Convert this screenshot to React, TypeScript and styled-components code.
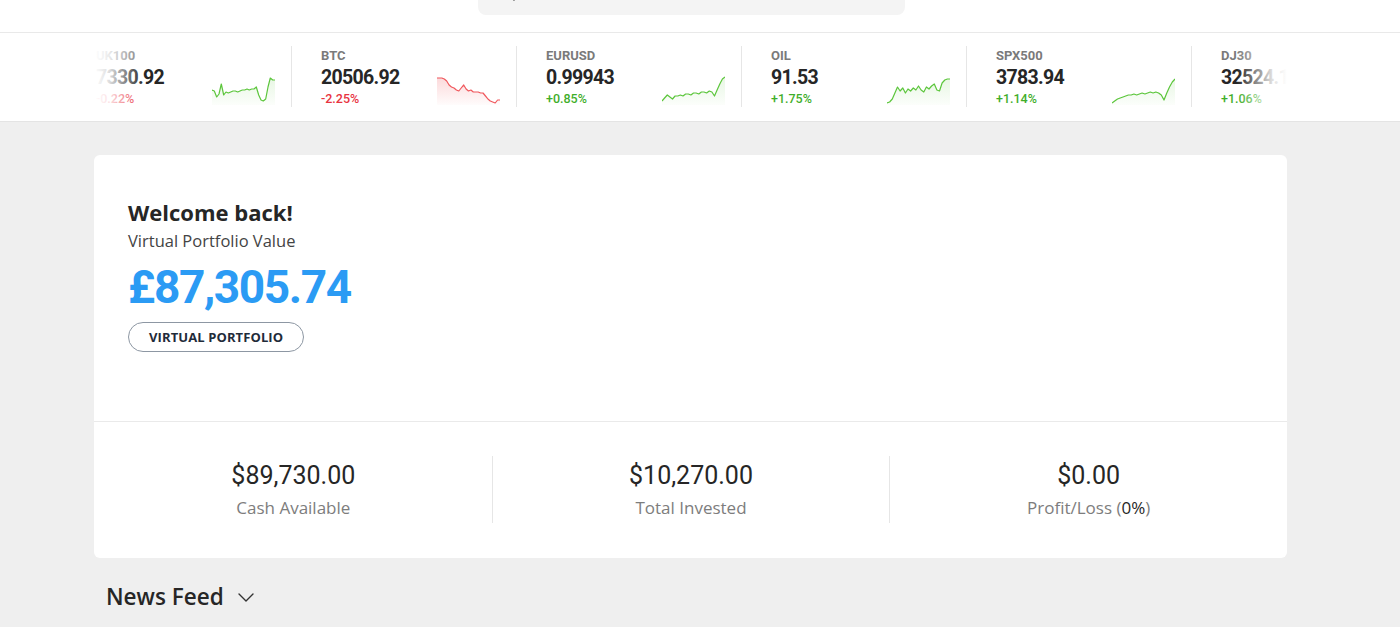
import React from "react";
import styled, { createGlobalStyle } from "styled-components";

const GlobalStyle = createGlobalStyle`
  html, body { margin: 0; padding: 0; }
  body {
    background: #efefef;
    font-family: "Open Sans", "Liberation Sans", sans-serif;
    color: #222;
  }
  * { box-sizing: border-box; }
`;

const Page = styled.div`
  min-height: 627px;
  background: #efefef;
`;

const Header = styled.header`
  height: 33px;
  background: #fff;
  border-bottom: 1px solid #e9e9e9;
  display: flex;
  padding-left: 478px;
`;

const SearchBar = styled.div`
  width: 427px;
  height: 15px;
  background: #f4f4f4;
  border-radius: 0 0 8px 8px;
  overflow: hidden;
  display: flex;
  padding-left: 22px;
`;

const SearchIcon = styled.svg`
  margin-top: -14px;
  width: 16px;
  height: 16px;
  flex: none;
`;

const TickerBar = styled.section`
  background: #fff;
  border-bottom: 1px solid #e4e4e4;
  height: 89px;
  padding: 13px 0 0 94px;
`;

const TickerViewport = styled.div`
  position: relative;
  width: 1193px;
  overflow: hidden;
`;

const TickerTrack = styled.div`
  display: flex;
  transform: translateX(-28px);
`;

const Fade = styled.div<{ $side: "left" | "right" }>`
  position: absolute;
  top: 0;
  bottom: 0;
  width: 50px;
  ${(p) => (p.$side === "left" ? "left: 0;" : "right: 0;")}
  background: linear-gradient(
    ${(p) => (p.$side === "left" ? "to right" : "to left")},
    rgba(255, 255, 255, 1) 0%,
    rgba(255, 255, 255, 0.85) 30%,
    rgba(255, 255, 255, 0) 100%
  );
  pointer-events: none;
`;

const TickerItem = styled.div<{ $first?: boolean }>`
  flex: none;
  width: 225px;
  height: 61px;
  padding: 0 16px 0 29px;
  border-left: 1px solid ${(p) => (p.$first ? "transparent" : "#e6e6e6")};
  display: flex;
  justify-content: space-between;
  align-items: flex-end;
`;

const TickerText = styled.div`
  display: flex;
  flex-direction: column;
  align-self: stretch;
  font-family: Roboto, "Liberation Sans", sans-serif;
`;

const TickerLabel = styled.div`
  font-size: 13px;
  line-height: 20px;
  font-weight: 700;
  color: #7a7a7a;
`;

const TickerValue = styled.div`
  font-size: 19.5px;
  line-height: 24px;
  font-weight: 700;
  color: #262626;
  letter-spacing: -0.7px;
`;

const TickerChange = styled.div<{ $up: boolean }>`
  font-size: 12.5px;
  line-height: 17px;
  font-weight: 500;
  color: ${(p) => (p.$up ? "#3fae2a" : "#e8343f")};
`;

const Spark = styled.svg`
  width: 63px;
  height: 30px;
  margin-bottom: 2px;
  flex: none;
`;

const Content = styled.main`
  width: 1193px;
  margin-left: 94px;
  padding-top: 33px;
`;

const Card = styled.section`
  background: #fff;
  border-radius: 6px;
  overflow: hidden;
`;

const CardTop = styled.div`
  height: 267px;
  padding: 42px 34px 0;
  border-bottom: 1px solid #eaeaea;
`;

const Welcome = styled.h1`
  margin: 0;
  font-size: 22px;
  line-height: 30px;
  font-weight: 700;
  color: #262626;
`;

const Subtitle = styled.div`
  font-size: 16.5px;
  line-height: 24px;
  margin-top: 2px;
  color: #444;
`;

const BigValue = styled.div`
  font-family: Roboto, "Liberation Sans", sans-serif;
  font-size: 46px;
  line-height: 60px;
  margin-top: 4px;
  font-weight: 700;
  color: #2b9bf4;
  letter-spacing: -1.4px;
`;

const PillButton = styled.button`
  display: block;
  margin-top: 5px;
  height: 30px;
  padding: 0 20px;
  border: 1px solid #8d97a3;
  border-radius: 15px;
  background: #fff;
  font-family: "Open Sans", "Liberation Sans", sans-serif;
  font-size: 13px;
  font-weight: 700;
  color: #1f2b3a;
  letter-spacing: 0.1px;
`;

const Stats = styled.div`
  display: grid;
  grid-template-columns: repeat(3, 1fr);
  padding: 34px 0 35px;
`;

const Stat = styled.div<{ $divider?: boolean }>`
  height: 67px;
  display: flex;
  flex-direction: column;
  align-items: center;
  justify-content: center;
  border-left: 1px solid ${(p) => (p.$divider ? "#e6e6e6" : "transparent")};
`;

const StatValue = styled.div`
  font-family: Roboto, "Liberation Sans", sans-serif;
  font-size: 25px;
  line-height: 32px;
  color: #262626;
`;

const StatLabel = styled.div`
  font-size: 17px;
  line-height: 24px;
  margin-top: 4px;
  color: #7d7d7d;
`;

const StatStrong = styled.span`
  color: #262626;
`;

const FeedHeading = styled.h2`
  margin: 0;
  padding: 23px 0 0 12px;
  display: flex;
  align-items: center;
  gap: 13px;
  font-size: 22.5px;
  line-height: 32px;
  font-weight: 600;
  color: #262626;
`;

type Tick = {
  label: string;
  value: string;
  change: string;
  up: boolean;
  points: number[];
};

const ticks: Tick[] = [
  {
    label: "UK100",
    value: "7330.92",
    change: "-0.22%",
    up: true,
    points: [15, 16, 22, 19, 9, 20, 17, 18, 17, 16, 16, 17, 16, 15, 15, 14, 15, 14, 14, 12, 20, 25, 26, 24, 12, 3, 5, 5],
  },
  {
    label: "BTC",
    value: "20506.92",
    change: "-2.25%",
    up: false,
    points: [3, 3, 3, 4, 6, 10, 12, 13, 15, 16, 13, 10, 14, 16, 15, 17, 17, 17, 18, 18, 21, 24, 26, 27, 28, 25, 25],
  },
  {
    label: "EURUSD",
    value: "0.99943",
    change: "+0.85%",
    up: true,
    points: [26, 23, 20, 22, 24, 21, 21, 20, 21, 19, 19, 20, 18, 18, 19, 17, 17, 18, 16, 17, 21, 15, 9, 4, 2],
  },
  {
    label: "OIL",
    value: "91.53",
    change: "+1.75%",
    up: true,
    points: [28, 27, 24, 18, 12, 16, 13, 18, 14, 16, 13, 15, 11, 15, 17, 12, 14, 11, 9, 15, 16, 8, 5, 4, 4],
  },
  {
    label: "SPX500",
    value: "3783.94",
    change: "+1.14%",
    up: true,
    points: [28, 26, 24, 23, 22, 21, 20, 20, 19, 20, 19, 18, 19, 18, 17, 18, 17, 18, 20, 25, 18, 12, 7, 4],
  },
  {
    label: "DJ30",
    value: "32524.16",
    change: "+1.06%",
    up: true,
    points: [26, 22, 21, 18, 18, 16, 16, 15, 14, 15, 14, 13, 14, 12, 13, 20, 16, 10, 6, 4],
  },
];

const Sparkline: React.FC<{ points: number[]; up: boolean; id: string }> = ({ points, up, id }) => {
  const w = 63;
  const h = 30;
  const step = w / (points.length - 1);
  const coords = points.map((y, i) => `${(i * step).toFixed(1)},${y}`);
  const line = coords.join(" ");
  const area = `0,${h} ${line} ${w},${h}`;
  const color = up ? "#5cc63c" : "#f0575c";
  return (
    <Spark viewBox={`0 0 ${w} ${h}`} preserveAspectRatio="none">
      <defs>
        <linearGradient id={id} x1="0" y1="0" x2="0" y2="1">
          <stop offset="0" stopColor={color} stopOpacity={up ? 0.14 : 0.22} />
          <stop offset="1" stopColor={color} stopOpacity={0.02} />
        </linearGradient>
      </defs>
      <polygon points={area} fill={`url(#${id})`} />
      <polyline points={line} fill="none" stroke={color} strokeWidth={1.2} strokeLinejoin="round" />
    </Spark>
  );
};

const Chevron: React.FC = () => (
  <svg width="18" height="18" viewBox="0 0 18 18" fill="none">
    <path d="M2 6l7 7 7-7" stroke="#333" strokeWidth="1.4" strokeLinecap="round" strokeLinejoin="round" />
  </svg>
);

export default function App() {
  return (
    <Page>
      <GlobalStyle />
      <Header>
        <SearchBar>
          <SearchIcon viewBox="0 0 16 16" fill="none">
            <circle cx="6.5" cy="6.5" r="5" stroke="#555" strokeWidth="1.6" />
            <path d="M10.5 10.5l3.5 3.5" stroke="#555" strokeWidth="1.6" strokeLinecap="round" />
          </SearchIcon>
        </SearchBar>
      </Header>
      <TickerBar>
        <TickerViewport>
          <TickerTrack>
            {ticks.map((t, i) => (
              <TickerItem key={t.label} $first={i === 0}>
                <TickerText>
                  <TickerLabel>{t.label}</TickerLabel>
                  <TickerValue>{t.value}</TickerValue>
                  <TickerChange $up={t.change.startsWith("+")}>{t.change}</TickerChange>
                </TickerText>
                <Sparkline points={t.points} up={t.up} id={`spark-${i}`} />
              </TickerItem>
            ))}
          </TickerTrack>
          <Fade $side="left" />
          <Fade $side="right" />
        </TickerViewport>
      </TickerBar>
      <Content>
        <Card>
          <CardTop>
            <Welcome>Welcome back!</Welcome>
            <Subtitle>Virtual Portfolio Value</Subtitle>
            <BigValue>£87,305.74</BigValue>
            <PillButton>VIRTUAL PORTFOLIO</PillButton>
          </CardTop>
          <Stats>
            <Stat>
              <StatValue>$89,730.00</StatValue>
              <StatLabel>Cash Available</StatLabel>
            </Stat>
            <Stat $divider>
              <StatValue>$10,270.00</StatValue>
              <StatLabel>Total Invested</StatLabel>
            </Stat>
            <Stat $divider>
              <StatValue>$0.00</StatValue>
              <StatLabel>
                Profit/Loss (<StatStrong>0%</StatStrong>)
              </StatLabel>
            </Stat>
          </Stats>
        </Card>
        <FeedHeading>
          News Feed
          <Chevron />
        </FeedHeading>
      </Content>
    </Page>
  );
}
